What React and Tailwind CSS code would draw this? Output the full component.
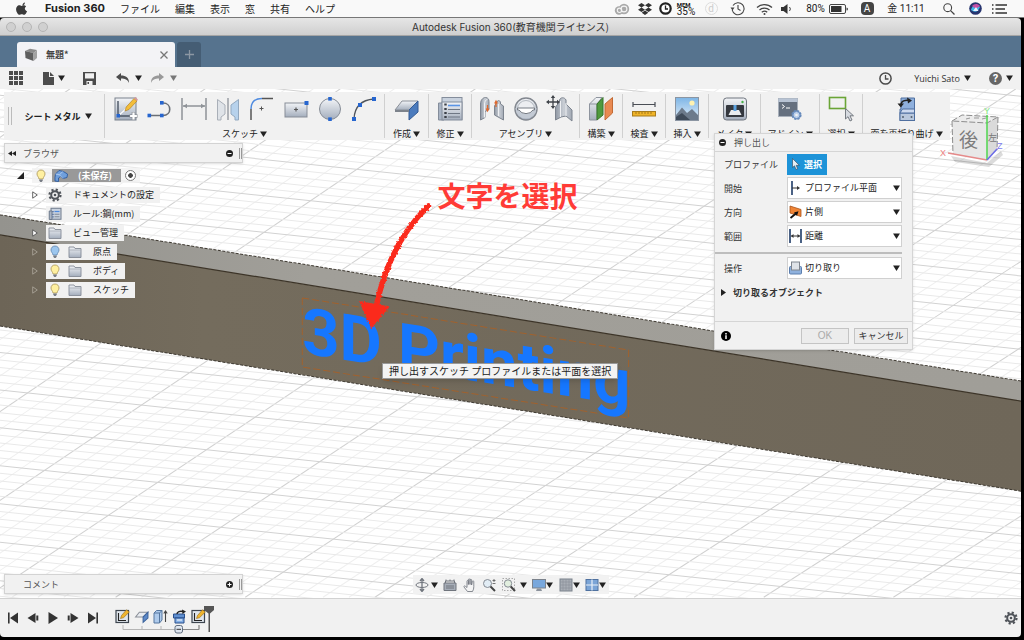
import React from "react";

const range = (a, b) => Array.from({ length: b - a + 1 }, (_, i) => a + i);

function Tri({ className = "text-[#222]" }) {
  return (
    <svg viewBox="0 0 8 7" className={"h-[6px] w-[7px] shrink-0 " + className} aria-hidden="true">
      <path d="M0 0.5H8L4 7Z" fill="currentColor" />
    </svg>
  );
}

function Ico({ size = "h-7 w-7", box = "0 0 28 28", children }) {
  return (
    <svg viewBox={box} className={"shrink-0 " + size} fill="none" aria-hidden="true">
      {children}
    </svg>
  );
}

/* ---------- ribbon icons ---------- */

const SketchIcon = () => (
  <Ico>
    <rect x="3" y="3" width="21" height="22" fill="url(#steel)" stroke="#7a828d" />
    <path d="M6 6V21H21" stroke="#4b5564" strokeWidth="1.4" />
    <path d="M6 21 L15 13" stroke="#fff" strokeWidth="1.2" />
    <rect x="4.500" y="19" width="3.500" height="3.500" fill="#2766cf" />
    <path d="M13 16l1.200-4L22 3.500l3 2.500-8 8.500z" fill="#f3bd3a" stroke="#a8791f" strokeWidth=".6" />
    <path d="M22 3.500l3 2.500 1-1.300-2.600-2.600z" fill="#d99a9a" />
    <path d="M21.500 17v8M17.500 21h8" stroke="#8a8f96" strokeWidth="3.600" />
    <path d="M21.500 17.600v6.800M18.100 21h6.800" stroke="#fff" strokeWidth="2.200" />
  </Ico>
);
const LineIcon = () => (
  <Ico>
    <path d="M3 20.500H17C26 20.500 26 8 17 8" stroke="#6a6f76" strokeWidth="1.600" />
    <rect x="1.500" y="18.700" width="3.600" height="3.600" fill="#2766cf" />
    <rect x="14" y="18.700" width="3.600" height="3.600" fill="#2766cf" />
    <rect x="14" y="6" width="3.600" height="3.600" fill="#2766cf" />
  </Ico>
);
const DimIcon = () => (
  <Ico>
    <path d="M2 3V25M26 3V25M3 11H25" stroke="#8f9398" strokeWidth="1.500" />
    <path d="M3 11l4-2.200v4.400zM25 11l-4-2.200v4.400z" fill="#8f9398" />
  </Ico>
);
const MirrorIcon = () => (
  <Ico>
    <path d="M3.500 4.500L11 10v9L7 22v3H3.500z" fill="#dfe3e8" stroke="#a9afb8" />
    <path d="M24.500 4.500L17 10v9l4 3v3h3.500z" fill="#b7d2ec" stroke="#93a9c0" />
    <path d="M14 3V25" stroke="#9a9ea4" strokeWidth="1.500" />
  </Ico>
);
const FilletIcon = () => (
  <Ico>
    <path d="M3 25V14" stroke="#555" strokeWidth="1.500" />
    <path d="M3 14C3 7 7 3.500 14 3.500" stroke="#4f8be0" strokeWidth="1.500" />
    <path d="M14 3.500H25" stroke="#555" strokeWidth="1.500" />
    <path d="M13.500 11.500v4M11.500 13.500h4" stroke="#555" strokeWidth="1" />
  </Ico>
);
const RectIcon = () => (
  <Ico>
    <rect x="3" y="8" width="22" height="14" fill="url(#steel)" stroke="#878d97" />
    <path d="M14 12.500v4M12 14.500h4" stroke="#555" strokeWidth="1.200" />
    <rect x="22.500" y="6" width="4" height="4" fill="#2766cf" />
  </Ico>
);
const CircleIcon = () => (
  <Ico>
    <circle cx="14" cy="14" r="10.500" fill="url(#steel)" stroke="#878d97" />
    <rect x="12.200" y="2" width="3.600" height="3.600" fill="#2766cf" />
    <rect x="12.200" y="22.400" width="3.600" height="3.600" fill="#2766cf" />
  </Ico>
);
const ArcIcon = () => (
  <Ico>
    <path d="M4 24C4.500 12 11 5 24 4" stroke="#50555c" strokeWidth="1.300" />
    <rect x="2" y="22" width="4" height="4" fill="#2766cf" />
    <rect x="8" y="8" width="4" height="4" fill="#2766cf" />
    <rect x="22" y="2" width="4" height="4" fill="#2766cf" />
  </Ico>
);
const FlangeIcon = () => (
  <Ico>
    <path d="M9 6H25L16 15H2z" fill="url(#steel)" stroke="#8b9099" />
    <path d="M25 6V17L16 25V15z" fill="#4b7bbd" stroke="#345b94" />
    <path d="M2 15h14v2H2z" fill="#7d838c" />
  </Ico>
);
const ModifyIcon = () => (
  <Ico>
    <rect x="6" y="2.500" width="20" height="22" fill="#c9d2de" stroke="#848d9b" />
    <path d="M2.500 8H8v17H2.500z" fill="#a9b4c4" stroke="#848d9b" />
    <rect x="6" y="7" width="20" height="18" fill="url(#steel)" stroke="#848d9b" />
    <path d="M12 10.500H24" stroke="#5a95e6" strokeWidth="1.600" />
    <path d="M12 14.500H24M12 18.500H24M12 22H24" stroke="#6f7784" strokeWidth="1" />
    <path d="M8.300 9.500h2.400M8.300 14h2.400M8.300 18h2.400M8.300 22h2.400" stroke="#3c4048" strokeWidth="2" />
  </Ico>
);
const JointIcon = () => (
  <Ico>
    <path d="M2.500 9c0-4 2.500-6.500 5-6.500 2 0 3.500 1.500 3.500 4v8l-4 2v6l-4.500 2.500z" fill="url(#iron)" stroke="#7d848f" />
    <path d="M6.500 22.500V9c0-2 1-4 3-5" stroke="#eef0f3" />
    <path d="M25.500 25L16.500 20v-9l3-5c1.500-1 3 0 3 2v1l3 2z" fill="url(#iron)" stroke="#7d848f" />
    <path d="M20.500 21V9" stroke="#eef0f3" />
    <path d="M9.500 10v5M8.200 13.500l1.300 2.500 1.300-2.500M18 7v5M16.700 8.500L18 6l1.300 2.500" stroke="#e0672c" strokeWidth="1.200" />
  </Ico>
);
const AsBuiltIcon = () => (
  <Ico>
    <circle cx="14" cy="14" r="11" fill="url(#steel)" stroke="#82878f" strokeWidth="1.400" />
    <circle cx="14" cy="14" r="8.500" fill="#eceef1" stroke="#b4b9c0" />
    <path d="M3.500 13H24.500A10.500 10.500 0 0 1 3.500 13z" fill="#c3cad4" />
    <path d="M5.500 13H22.500V15H21A8 7 0 0 1 7 15H5.500z" fill="#fff" stroke="#777c84" />
  </Ico>
);
const MoveJointIcon = () => (
  <Ico>
    <path d="M9.500 25V12l4-5V5c1-3 5-3 6.500 0v4l6 6v11l-6-5-5 1z" fill="url(#iron)" stroke="#7d848f" />
    <path d="M14.500 22V6M20 21V8" stroke="#eef0f3" />
    <path d="M7 2v10M2 7h10" stroke="#3f4349" strokeWidth="1.300" />
    <path d="M7 0l2.200 3H4.800zM7 14l2.200-3H4.800zM0 7l3-2.200v4.400zM14 7l-3-2.200v4.400z" fill="#3f4349" />
  </Ico>
);
const ConstructIcon = () => (
  <Ico>
    <path d="M2.500 9L9 2.500H15L10 9V25H2.500z" fill="url(#steel)" stroke="#8e949e" />
    <path d="M2.500 9H10" stroke="#8e949e" />
    <path d="M10 9l6-6.500V20l-6 5z" fill="#4f9a3e" stroke="#37752a" />
    <path d="M18 9l7.500-6.500V18L18 25z" fill="#e98a52" stroke="#c26a35" />
  </Ico>
);
const InspectIcon = () => (
  <Ico>
    <path d="M3 9.500H25M3 7v5M25 7v5" stroke="#4a4e55" strokeWidth="1.200" />
    <rect x="2.500" y="16.500" width="23" height="4.500" fill="#f0b428" stroke="#a87c1c" />
    <path d="M6 17v2M9 17v2M12 17v2M15 17v2M18 17v2M21 17v2" stroke="#8f6a17" strokeWidth=".8" />
  </Ico>
);
const InsertIcon = () => (
  <Ico>
    <rect x="2.500" y="2.500" width="23" height="23" fill="url(#sky)" stroke="#8b95a2" />
    <circle cx="19" cy="8" r="2.600" fill="#fff2b0" />
    <path d="M3 20L9 12.500 14 18l5-4 6 6v5H3z" fill="#6c7a8b" />
    <path d="M3 22l6-4 8 7H3z" fill="#3f4b5a" />
  </Ico>
);
const MakeIcon = () => (
  <Ico>
    <rect x="2.500" y="3" width="23" height="22" rx="3" fill="url(#steel)" stroke="#6f757e" />
    <rect x="5" y="10" width="18" height="12" rx="1" fill="#34383f" />
    <path d="M7.500 20l2.500-5h8l2.500 5z" fill="#e8ebef" />
    <rect x="12.500" y="10" width="3" height="6" fill="#5aa0de" />
    <circle cx="21.500" cy="7" r="1.200" fill="#49b04a" />
  </Ico>
);
const AddinIcon = () => (
  <Ico>
    <rect x="2.500" y="3.500" width="19" height="18" fill="#65707f" stroke="#a8b0bb" />
    <rect x="2.500" y="3.500" width="19" height="3.500" fill="#b7c3d4" />
    <path d="M6 9.500l2.500 2L6 13.500M10 13h4" stroke="#fff" strokeWidth="1" />
    <circle cx="20.500" cy="20" r="4.200" fill="#a9c3e6" stroke="#6589bb" strokeWidth="1.800" strokeDasharray="2.200 1.100" />
    <circle cx="20.500" cy="20" r="3.600" fill="#bcd0ec" stroke="#6589bb" />
    <circle cx="20.500" cy="20" r="1.300" fill="#f1f1f1" />
  </Ico>
);
const SelectIcon = () => (
  <Ico>
    <rect x="2.500" y="2.500" width="16" height="11" stroke="#6aa536" strokeWidth="1.600" />
    <path d="M18.500 13.500V24l2.500-2.300 2 4.300 2-1-2-4.200h3.500z" fill="#d6dae0" stroke="#6b7078" strokeWidth=".9" />
  </Ico>
);
const RefoldIcon = () => (
  <Ico>
    <path d="M8 3H21.500V25.500H7V14h1z" fill="#8fb0dd" stroke="#4f6f9f" />
    <rect x="7" y="18" width="14.500" height="7.500" fill="#b9c8dd" stroke="#4f6f9f" />
    <path d="M7 18l2.500-4h12v4z" fill="#cddaf0" stroke="#4f6f9f" />
    <circle cx="10" cy="22" r="1" fill="#55616f" />
    <circle cx="18.500" cy="22" r="1" fill="#55616f" />
    <path d="M8 10C8 6 12 4.500 17 5.500" stroke="#222" strokeWidth="1.600" />
    <path d="M4.500 8.500h6.500l-3.200 4zM14 2.500l5 3-4 3z" fill="#222" />
  </Ico>
);

/* ---------- small tree icons ---------- */

const Bulb = ({ blue }) => (
  <Ico size="h-[14px] w-[14px]" box="0 0 14 14">
    <path
      d="M7 1C4.500 1 3 2.800 3 5c0 2 1.700 2.800 2 5h4c.3-2.200 2-3 2-5 0-2.200-1.500-4-4-4z"
      fill={blue ? "#9cc6ee" : "#fff0a0"}
      stroke={blue ? "#5d83ad" : "#a99455"}
      strokeWidth=".8"
    />
    <path d="M5.300 10.500h3.400v1.300L7.700 13H6.300l-1-1.200z" fill="#777c84" />
  </Ico>
);
const Folder = () => (
  <Ico size="h-[14px] w-[14px]" box="0 0 14 14">
    <path d="M1 2h5l1 1.500h6v9H1z" fill="url(#steel)" stroke="#858b96" strokeWidth=".9" />
    <path d="M1 5h12" stroke="#a2a8b2" strokeWidth=".8" />
  </Ico>
);
const Gear = ({ size = "h-[14px] w-[14px]" }) => (
  <Ico size={size} box="0 0 14 14">
    <circle cx="7" cy="7" r="5.500" stroke="#50545a" strokeWidth="2.200" strokeDasharray="2.160 2.160" />
    <circle cx="7" cy="7" r="3.800" stroke="#50545a" strokeWidth="2" />
    <circle cx="7" cy="7" r="1.300" fill="#50545a" />
  </Ico>
);
const RuleIcon = () => (
  <Ico size="h-[14px] w-[14px]" box="0 0 28 28">
    <rect x="6" y="2.500" width="20" height="22" fill="#c9d2de" stroke="#6e7a8c" strokeWidth="2" />
    <path d="M2.500 8H8v17H2.500z" fill="#a9b4c4" stroke="#6e7a8c" strokeWidth="2" />
    <path d="M13 9H23" stroke="#4c8ae0" strokeWidth="2.500" />
    <path d="M13 14.500H23M13 19.500H23" stroke="#6f7784" strokeWidth="1.600" />
    <path d="M9 9h2M9 14.500h2M9 19.500h2" stroke="#2c4f8b" strokeWidth="2.500" />
  </Ico>
);
const PartIcon = () => (
  <Ico size="h-[14px] w-[14px]" box="0 0 14 14">
    <path d="M1.500 5L5 1.500l4 .8L13.500 5l-.5 3.500L9 9.500 6.500 7.500 4.500 9v3.500L1 12V8.500z" fill="#6f9fdc" stroke="#2c5a9e" strokeWidth=".9" />
    <path d="M1.500 5l4 .8L9 9.500M5.500 5.800L9 2.300" stroke="#c5daf3" strokeWidth=".7" />
  </Ico>
);

/* ---------- drawing area ---------- */

function Scene() {
  return (
    <svg viewBox="0 89 1020 509" preserveAspectRatio="xMidYMid slice" className="absolute inset-0 h-full w-full" role="img" aria-label="モデル">
      <defs>
        <linearGradient id="steel" x1="0" y1="0" x2="0" y2="1">
          <stop offset="0" stopColor="#f2f4f7" />
          <stop offset="1" stopColor="#a4aebd" />
        </linearGradient>
        <linearGradient id="iron" x1="0" y1="0" x2="1" y2="0">
          <stop offset="0" stopColor="#8f97a3" />
          <stop offset="0.500" stopColor="#c9ced5" />
          <stop offset="1" stopColor="#a3aab5" />
        </linearGradient>
        <linearGradient id="sky" x1="0" y1="0" x2="0" y2="1">
          <stop offset="0" stopColor="#7db5e6" />
          <stop offset="1" stopColor="#e4eff8" />
        </linearGradient>
        <linearGradient id="face" x1="0" y1="0" x2="1" y2="0">
          <stop offset="0" stopColor="#6d6557" />
          <stop offset="0.2" stopColor="#746c5d" />
          <stop offset="1" stopColor="#6f6759" />
        </linearGradient>
        <linearGradient id="rim" x1="0" y1="0" x2="1" y2="0">
          <stop offset="0" stopColor="#94938e" />
          <stop offset="0.3" stopColor="#a19f99" />
          <stop offset="1" stopColor="#a09e98" />
        </linearGradient>
        <filter id="rough" x="-20%" y="-20%" width="140%" height="140%">
          <feTurbulence type="fractalNoise" baseFrequency="0.5" numOctaves="2" seed="4" />
          <feDisplacementMap in="SourceGraphic" scale="3" xChannelSelector="R" yChannelSelector="G" />
        </filter>
      </defs>
      <rect x="0" y="89" width="1020" height="509" fill="#fff" />
      {[1, 2, 3, 4, 0].map((m) =>
        range(-8, 7).map((k) => (
          <line
            key={k + "b" + m}
            x1={245 + (k + m / 5) * 129.5}
            y1="597"
            x2={1015 + (k + m / 5) * 135}
            y2="89"
            stroke={m === 0 ? "#d0d0d0" : "#efefef"}
          />
        ))
      )}
      {[1, 2, 3, 4, 0].map((m) =>
        range(-12, 6).map((n) => {
          const k = n + m / 5;
          const y = 390 + 37.6 * k + 0.1 * k * k;
          return <line key={n + "a" + m} x1="0" y1={y} x2="1020" y2={y + 108} stroke={m === 0 ? "#d2d2d2" : "#e9e9e9"} />;
        })
      )}
      <path d="M0 215L1020 381V401L0 235z" fill="url(#rim)" />
      <path d="M0 235L1020 401V491L0 326z" fill="url(#face)" />
      <path d="M0 235L1020 401" stroke="#3c3428" strokeWidth="1.200" />
      <path d="M0 215L1020 381M0 326L1020 491" stroke="#3f3a32" strokeDasharray="3 1.500" />
      <path d="M302 298L628 350V418L302 367z" fill="none" stroke="#a0622f" strokeDasharray="7 3" />
      <g transform="translate(302 353) skewY(9.200)">
        <text x="0" y="0" fontSize="65" fontWeight="700" fill="#1677ff" fontFamily="Roboto, 'Liberation Sans', sans-serif">
          3D Printing
        </text>
      </g>
      <g filter="url(#rough)">
        <path d="M428 206C405 228 386 258 376 306" fill="none" stroke="#fb2c1d" strokeWidth="5.500" strokeLinecap="round" />
        <path d="M360 302L388 307 371 327z" fill="#fb2c1d" stroke="#fb2c1d" strokeWidth="1.500" />
      </g>
      <text x="437" y="207" fontSize="28" fontWeight="700" fill="#ff3b36" fontFamily="'Noto Sans CJK JP', sans-serif">
        文字を選択
      </text>
    </svg>
  );
}

function ViewCube() {
  return (
    <svg viewBox="936 102 70 68" className="absolute right-[14px] top-[13px] h-[68px] w-[70px]" role="img" aria-label="ビューキューブ">
      <path d="M950 156l36 7 14-12 2 4-14 12-34-5z" fill="#000" opacity=".14" />
      <path d="M951 121L961 115 997 117 986 123z" fill="#ececec" />
      <path d="M986 123L997 117 996 150 986 160z" fill="#dadada" />
      <path d="M951 121L986 123V160L952 154z" fill="#e8e8e8" />
      <path d="M951 121L961 115 997 117 986 123zM951 121L952 154M997 117L996 150" fill="none" stroke="#8d8d8d" strokeDasharray="6 2" />
      <path d="M965 119l4-1M973 118h5M981 119l4-1" stroke="#999" />
      <text x="958" y="147" fontSize="19" fill="#7d7d7d" fontFamily="'Noto Sans CJK JP', sans-serif">後</text>
      <text x="987" y="141" fontSize="9" fill="#777" fontFamily="'Noto Sans CJK JP', sans-serif">左</text>
      <path d="M986 160L947 153" stroke="#e58a8a" strokeWidth="1.500" />
      <path d="M986 160V115" stroke="#4fd64f" strokeWidth="1.500" />
      <path d="M986 160L996 149" stroke="#6b6be8" strokeWidth="1.500" />
      <g fontSize="9" fontFamily="'Liberation Sans', sans-serif">
        <text x="939" y="156" fill="#ee8080">X</text>
        <text x="983" y="114" fill="#7fe87f">Y</text>
        <text x="996" y="149" fill="#8080ee">Z</text>
      </g>
    </svg>
  );
}

/* ---------- top bars ---------- */

function Cell({ w, label, children }) {
  return (
    <button type="button" aria-label={label} className={"flex h-full shrink-0 items-center justify-center " + w}>
      {children}
    </button>
  );
}

function MenuBar() {
  return (
    <header className="flex h-[18px] shrink-0 items-center border-b border-[#777] bg-[#f9f9f9] pl-4 pr-[14px] text-[10px] leading-none text-[#222]">
      <svg viewBox="0 0 24 24" className="h-[13px] w-[13px]" aria-hidden="true">
        <path
          fill="#3a3a3a"
          d="M16.400 1c.1 1.300-.4 2.500-1.200 3.400-.8 1-2 1.600-3.200 1.500-.1-1.200.5-2.500 1.200-3.300C14 1.700 15.300 1.100 16.400 1zM20.500 17.200c-.6 1.300-.9 1.900-1.600 3-1 1.600-2.500 3.500-4.200 3.500-1.600 0-2-1-4.100-1s-2.600 1-4.200 1c-1.700 0-3.100-1.700-4.100-3.300C-.4 16-.7 10.900 1.900 8.200c1-1.200 2.700-2 4.300-2 1.700 0 2.700 1 4.100 1s2.200-1 4.200-1c1.500 0 3 .8 4.100 2.200-3.600 2-3 7.100 1.900 8.800z"
        />
      </svg>
      <nav className="ml-4 flex items-center gap-[15px]">
        <button type="button" className="font-[Inter,sans-serif] text-[11px] font-bold">Fusion 360</button>
        <button type="button">ファイル</button>
        <button type="button">編集</button>
        <button type="button">表示</button>
        <button type="button">窓</button>
        <button type="button">共有</button>
        <button type="button">ヘルプ</button>
      </nav>
      <div className="ml-auto flex h-full items-center font-[Roboto,'Noto_Sans_CJK_JP',sans-serif]">
        <Cell w="w-6" label="Creative Cloud">
          <Ico size="h-3 w-4" box="0 0 16 12">
            <circle cx="10" cy="6" r="5.200" fill="#aaa" />
            <circle cx="5" cy="7.500" r="4.200" fill="#aaa" />
            <circle cx="10" cy="6" r="2.900" stroke="#f4f4f4" strokeWidth="1.100" />
            <circle cx="5.500" cy="7.300" r="2.200" stroke="#f4f4f4" strokeWidth="1.100" />
          </Ico>
        </Cell>
        <Cell w="w-[22px]" label="Dropbox">
          <Ico size="h-3 w-[14px]" box="0 0 14 12">
            <path d="M3.500 0L7 2.200 3.500 4.400 0 2.200zM10.500 0L14 2.200 10.500 4.400 7 2.200zM3.500 4.500L7 6.700 3.500 8.900 0 6.700zM10.500 4.500L14 6.700 10.500 8.900 7 6.700zM7 7.500l3.300 2.200L7 12 3.700 9.700z" fill="#333" />
          </Ico>
        </Cell>
        <Cell w="w-[18px]" label="時計">
          <Ico size="h-[13px] w-[13px]" box="0 0 13 13">
            <circle cx="6.500" cy="6.500" r="5.200" stroke="#222" strokeWidth="2.200" fill="#fff" />
            <path d="M6.500 3.500V7H9" stroke="#222" strokeWidth="1.300" />
          </Ico>
        </Cell>
        <Cell w="w-6" label="メモリ">
          <span className="flex flex-col items-start leading-none">
            <span className="text-[6px] font-bold leading-[6px]">MEM</span>
            <span className="text-[10px] leading-[8px]">35%</span>
          </span>
        </Cell>
        <Cell w="w-[26px]" label="ドック">
          <span className="flex h-[13px] w-[13px] items-center justify-center rounded-full border border-[#ddd] text-[10px] text-[#ccc]">d</span>
        </Cell>
        <Cell w="w-[26px]" label="Time Machine">
          <Ico size="h-[15px] w-[15px]" box="0 0 15 15">
            <path d="M3 4.500A6 6 0 1 1 2.200 9" stroke="#444" strokeWidth="1.100" />
            <path d="M.5 6.500h4L2.500 9.500z" fill="#444" />
            <path d="M8 4v4l2.500 1.500" stroke="#444" strokeWidth="1.100" />
          </Ico>
        </Cell>
        <Cell w="w-7" label="Wi-Fi">
          <Ico size="h-3 w-[17px]" box="0 0 17 12">
            <path d="M1 4.500A11 11 0 0 1 16 4.500M3.500 7A7.500 7.500 0 0 1 13.500 7M5.800 9.300A4 4 0 0 1 11.200 9.300" stroke="#444" strokeWidth="1.300" />
            <circle cx="8.500" cy="11" r="1" fill="#444" />
          </Ico>
        </Cell>
        <Cell w="w-[18px]" label="音量">
          <Ico size="h-[10px] w-3" box="0 0 12 10">
            <path d="M0 3h2.500L6.500 0v10l-4-3H0z" fill="#333" />
            <path d="M8.500 3a3 3 0 0 1 0 4" stroke="#444" />
          </Ico>
        </Cell>
        <Cell w="w-[62px]" label="バッテリー">
          <span className="mr-1">80%</span>
          <Ico size="h-[10px] w-[19px]" box="0 0 19 10">
            <rect x=".5" y=".5" width="16" height="9" rx="1.500" stroke="#444" />
            <rect x="2" y="2" width="10.500" height="6" fill="#333" />
            <path d="M17.500 3.500a1.500 1.500 0 0 1 0 3z" fill="#444" />
          </Ico>
        </Cell>
        <Cell w="w-[18px]" label="入力ソース">
          <span className="flex h-[13px] w-[13px] items-center justify-center rounded-sm bg-[#444] text-[10px] text-white">A</span>
        </Cell>
        <Cell w="w-[60px]" label="日時">
          金 11:11
        </Cell>
        <Cell w="w-[26px]" label="検索">
          <Ico size="h-3 w-3" box="0 0 12 12">
            <circle cx="4.700" cy="4.700" r="3.900" stroke="#444" strokeWidth="1.100" />
            <path d="M7.600 7.600L11.500 11.500" stroke="#444" strokeWidth="1.300" />
          </Ico>
        </Cell>
        <Cell w="w-[26px]" label="Siri">
          <Ico size="h-[13px] w-[13px]" box="0 0 13 13">
            <circle cx="6.500" cy="6.500" r="6.300" fill="#27346f" />
            <path d="M2 8C3 3 7 2 11 5c-2 5-5 6-9 3z" fill="#3fb6e8" />
            <path d="M3 4c2-2 5-3 8 0L7 7z" fill="#c44fa6" />
            <path d="M4 9l3-4 2.500 4z" fill="#e8f4ff" />
          </Ico>
        </Cell>
        <Cell w="w-[22px]" label="通知センター">
          <Ico size="h-[10px] w-[15px]" box="0 0 15 10">
            <path d="M3.500 1H15M3.500 5H13M3.500 9H15" stroke="#333" strokeWidth="1.500" />
            <path d="M0 1h1.500M0 5h1.500M0 9h1.500" stroke="#333" strokeWidth="1.500" />
          </Ico>
        </Cell>
      </div>
    </header>
  );
}

function TitleBar() {
  return (
    <div className="grid h-[18px] shrink-0 grid-cols-[1fr_auto_1fr] items-center rounded-t-[4px] border-b border-[#a5a5a5] bg-linear-to-b from-[#e6e6e6] to-[#cfcfcf]">
      <div className="flex gap-1.5 pl-1.5">
        {["閉じる", "しまう", "拡大"].map((l) => (
          <button key={l} type="button" aria-label={l} className="h-[10px] w-[10px] rounded-full border border-[#b5b5b5] bg-[#d0d0d0]" />
        ))}
      </div>
      <h1 className="text-[10px] leading-none text-[#333]">
        <span className="font-[Inter,sans-serif]">Autodesk Fusion 360(</span>教育機関ライセンス)
      </h1>
    </div>
  );
}

function TabStrip() {
  return (
    <div className="flex h-[31px] shrink-0 items-end gap-0.5 bg-[#56738e] pl-[17px]">
      <div className="flex h-[25px] w-[158px] items-center rounded-t-[3px] bg-[#f3f3f6] px-[7px] text-[9px] font-bold text-[#444]">
        <Ico size="h-[14px] w-[14px]" box="0 0 14 14">
          <path d="M1 3L6 .8 13 2 9.500 5z" fill="#8b8b8b" />
          <path d="M1 3L9.500 5V13L1.500 10z" fill="#5f5f5f" />
          <path d="M9.500 5L13 2V10L9.500 13z" fill="#a2a2a2" />
        </Ico>
        <span className="ml-2">無題*</span>
        <button type="button" aria-label="タブを閉じる" className="ml-auto">
          <Ico size="h-2 w-2" box="0 0 8 8">
            <path d="M.5.5l7 7M7.500.5l-7 7" stroke="#777" strokeWidth="1.300" />
          </Ico>
        </button>
      </div>
      <button type="button" aria-label="新しいタブ" className="flex h-[25px] w-6 items-center justify-center rounded-t-[3px] bg-[#455d74]">
        <Ico size="h-[9px] w-[9px]" box="0 0 9 9">
          <path d="M4.500 0v9M0 4.500h9" stroke="#8c97a3" strokeWidth="1.300" />
        </Ico>
      </button>
    </div>
  );
}

function QuickBar() {
  return (
    <div className="flex h-[22px] shrink-0 items-center bg-[#f1f1f1] pl-[9px] pr-2">
      <button type="button" aria-label="データパネル">
        <Ico size="h-[14px] w-[14px]" box="0 0 14 14">
          {[0, 5, 10].map((x) => [0, 5, 10].map((y) => <rect key={x + "-" + y} x={x} y={y} width="4" height="4" fill="#4c4c4c" />))}
        </Ico>
      </button>
      <button type="button" aria-label="ファイル" className="ml-5 flex items-center gap-1">
        <Ico size="h-[13px] w-[11px]" box="0 0 11 13">
          <path d="M0 0h6v5h5v8H0zM7 0l4 4H7z" fill="#4c4c4c" />
        </Ico>
        <Tri />
      </button>
      <button type="button" aria-label="保存" className="ml-[18px]">
        <Ico size="h-[13px] w-[13px]" box="0 0 13 13">
          <path d="M0 0h13v13H0z" fill="#4c4c4c" />
          <path d="M2 1.200h9v5.300H2zM3.500 9h6v4h-6z" fill="#f1f1f1" />
          <path d="M4.500 10h1.500v2H4.500z" fill="#4c4c4c" />
        </Ico>
      </button>
      <button type="button" aria-label="元に戻す" className="ml-5 flex items-center gap-1.5">
        <Ico size="h-[10px] w-[13px]" box="0 0 13 10">
          <path d="M0 4L5 0v2.500c5 0 8 2 8 7.500-1.500-3.500-4-4.500-8-4.500V8z" fill="#4c4c4c" />
        </Ico>
        <Tri />
      </button>
      <button type="button" aria-label="やり直し" className="ml-[9px] flex items-center gap-1.5">
        <Ico size="h-[10px] w-[13px]" box="0 0 13 10">
          <path d="M13 4L8 0v2.500C3 2.500 0 4.500 0 10c1.500-3.500 4-4.500 8-4.500V8z" fill="#999" />
        </Ico>
        <Tri className="text-[#777]" />
      </button>
      <div className="ml-auto flex items-center">
        <button type="button" aria-label="ジョブの状態">
          <Ico size="h-[13px] w-[13px]" box="0 0 13 13">
            <circle cx="6.500" cy="6.500" r="5.600" stroke="#4c4c4c" strokeWidth="1.500" />
            <path d="M6.500 3v4H9.500" stroke="#4c4c4c" strokeWidth="1.300" />
          </Ico>
        </button>
        <button type="button" className="ml-[22px] flex items-center gap-1 font-['Open_Sans',sans-serif] text-[9px] leading-none text-[#333]">
          Yuichi Sato
          <Tri />
        </button>
        <button type="button" aria-label="ヘルプ" className="ml-[18px] flex items-center gap-1">
          <span className="flex h-[13px] w-[13px] items-center justify-center rounded-full bg-[#666] font-[Inter,sans-serif] text-[10px] font-bold leading-none text-white">?</span>
          <Tri />
        </button>
      </div>
    </div>
  );
}

/* ---------- ribbon ---------- */

const GROUPS = [
  { label: "スケッチ", w: "w-[280px]", tools: [["スケッチを作成", SketchIcon], ["線分", LineIcon], ["寸法", DimIcon], ["ミラー", MirrorIcon], ["フィレット", FilletIcon], ["長方形", RectIcon], ["円", CircleIcon], ["円弧", ArcIcon]] },
  { label: "作成", w: "w-11", tools: [["フランジ", FlangeIcon]] },
  { label: "修正", w: "w-[43px]", tools: [["ルール", ModifyIcon]] },
  { label: "アセンブリ", w: "w-[108px]", tools: [["ジョイント", JointIcon], ["位置固定ジョイント", AsBuiltIcon], ["移動", MoveJointIcon]] },
  { label: "構築", w: "w-[43px]", tools: [["オフセット平面", ConstructIcon]] },
  { label: "検査", w: "w-[43px]", tools: [["計測", InspectIcon]] },
  { label: "挿入", w: "w-[43px]", tools: [["デカール", InsertIcon]] },
  { label: "メイク", w: "w-[52px]", tools: [["3Dプリント", MakeIcon]] },
  { label: "アドイン", w: "w-[59px]", tools: [["スクリプト", AddinIcon]] },
  { label: "選択", w: "w-[43px]", tools: [["選択ツール", SelectIcon]] },
  { label: "面を再折り曲げ", w: "w-[88px]", tools: [["再折り曲げ", RefoldIcon]] },
];

function Ribbon() {
  return (
    <div className="relative ml-1 mt-[3px] flex h-12 items-stretch self-start bg-[#f1f1f1] text-[9px] leading-none text-[#222]">
      <div className="ml-1 flex items-center gap-[2px]">
        <span className="h-[18px] w-px bg-[#bbb]" />
        <span className="h-[18px] w-px bg-[#bbb]" />
      </div>
      <button type="button" className="flex w-[92px] items-center justify-center gap-1 font-bold">
        シート メタル
        <Tri />
      </button>
      {GROUPS.map((g) => (
        <section key={g.label} className={"flex items-stretch " + g.w}>
          <span className="my-0.5 w-px bg-[#d0d0d0]" />
          <div className="flex flex-1 flex-col items-center justify-between pb-px pt-[3px]">
            <div className="flex">
              {g.tools.map(([name, Icon]) => (
                <button key={name} type="button" aria-label={name} className={g.tools.length > 1 ? "flex w-[34px] justify-center" : "flex"}>
                  <Icon />
                </button>
              ))}
            </div>
            <button type="button" className="flex items-center gap-0.5 whitespace-nowrap leading-[10px]">
              {g.label}
              <Tri />
            </button>
          </div>
        </section>
      ))}
    </div>
  );
}

/* ---------- browser ---------- */

function PanelBar({ title, collapse, open }) {
  return (
    <div className="flex h-5 w-[239px] items-center border border-[#d3d3d3] bg-[#f1f1f1] pl-[3px] text-[9px] leading-none text-[#555] shadow-sm">
      <span className="flex w-[15px]">
        {collapse && (
          <Ico size="h-[5px] w-2" box="0 0 8 5">
            <path d="M4 0v5L0 2.500zM8 0v5L4 2.500z" fill="#222" />
          </Ico>
        )}
      </span>
      <h2>{title}</h2>
      <button type="button" aria-label={title + "の表示"} className="ml-auto">
        <Ico size="h-[7px] w-[7px]" box="0 0 7 7">
          <circle cx="3.500" cy="3.500" r="3.500" fill="#222" />
          <path d="M1.500 3.500h4" stroke="#fff" />
          {open && <path d="M3.500 1.500v4" stroke="#fff" />}
        </Ico>
      </button>
      <span className="ml-1.5 h-[11px] w-[3px] border-x border-[#999]" />
    </div>
  );
}

const NODES = [
  { label: "ドキュメントの設定", icon: Gear, arrow: true },
  { label: "ルール:鋼(mm)", icon: RuleIcon },
  { label: "ビュー管理", icon: Folder, arrow: true },
  { label: "原点", icon: Folder, arrow: true, bulb: "blue" },
  { label: "ボディ", icon: Folder, arrow: true, bulb: "yellow" },
  { label: "スケッチ", icon: Folder, arrow: true, bulb: "yellow" },
];

function Tree() {
  return (
    <ul className="relative mt-1 flex flex-col gap-0.5 text-[9px] leading-none text-[#222]">
      <li className="flex h-[17px] items-center">
        <Ico size="ml-[17px] h-[7px] w-[7px]" box="0 0 7 7">
          <path d="M7 0V7H0z" fill="#222" />
        </Ico>
        <div className="ml-2 flex h-[15px] items-center bg-[#f1f1f1]/80 pl-0.5 pr-1">
          <Bulb />
          <span className="ml-1 flex h-[13px] w-[69px] items-center bg-[#999] pl-0.5 font-bold text-white">
            <PartIcon />
            <span className="ml-2.5">(未保存)</span>
          </span>
          <input
            type="radio"
            defaultChecked
            aria-label="アクティブにする"
            className="ml-1 h-[11px] w-[11px] appearance-none rounded-full border border-[#777] bg-white bg-[radial-gradient(circle,#444_32%,transparent_40%)]"
          />
        </div>
      </li>
      {NODES.map((n) => {
        const Icon = n.icon;
        return (
          <li key={n.label} className="flex h-[17px] items-center">
            <span className="ml-8 flex w-[14px] shrink-0">
              {n.arrow && (
                <Ico size="h-2 w-[6px]" box="0 0 6 8">
                  <path d="M.7.8L5.300 4 .7 7.200z" stroke={n.bulb ? "#a8a396" : "#555"} strokeWidth=".9" fill={n.bulb ? "none" : "#fff"} />
                </Ico>
              )}
            </span>
            <div className="flex h-4 items-center bg-[#f1f1f1] pl-0.5 pr-1.5">
              {n.bulb && (
                <span className="mr-1.5 flex">
                  <Bulb blue={n.bulb === "blue"} />
                </span>
              )}
              <Icon />
              <span className="ml-[11px] whitespace-nowrap">{n.label}</span>
            </div>
          </li>
        );
      })}
    </ul>
  );
}

/* ---------- extrude dialog ---------- */

const StartIcon = () => (
  <Ico size="h-[14px] w-[13px]" box="0 0 13 14">
    <path d="M3 0V14" stroke="#1d3a66" strokeWidth="1.600" />
    <path d="M3 7H9" stroke="#333" />
    <path d="M8 5l3 2-3 2z" fill="#333" />
  </Ico>
);
const SideIcon = () => (
  <Ico size="h-[14px] w-[13px]" box="0 0 13 14">
    <path d="M1 1l11 3.500V11.500L1 8z" fill="#ef8436" stroke="#a9531a" strokeWidth=".8" />
    <path d="M1.500 13l6-5" stroke="#111" strokeWidth="1.800" />
    <path d="M9.500 6.200L5 7.500 8 10.800z" fill="#111" />
  </Ico>
);
const DistanceIcon = () => (
  <Ico size="h-[14px] w-[13px]" box="0 0 13 14">
    <path d="M1 0V14M12 0V14" stroke="#1d3a66" strokeWidth="1.600" />
    <path d="M2 7H11" stroke="#333" />
    <path d="M2 7l2.500-2v4zM11 7L8.500 5v4z" fill="#333" />
  </Ico>
);
const CutIcon = () => (
  <Ico size="h-[14px] w-[13px]" box="0 0 13 14">
    <rect x=".5" y="5.500" width="12" height="7.500" rx="1" fill="#8fb1dd" stroke="#5b7eae" />
    <rect x="2.500" y="1" width="8" height="8" fill="#dfe3e8" stroke="#7f858e" />
  </Ico>
);

function SelectRow({ id, label, value, icon: Icon, options }) {
  return (
    <div className="flex h-6 items-center">
      <label htmlFor={id} className="w-[63px] shrink-0">{label}</label>
      <div className="flex h-[22px] min-w-0 flex-1 items-center border border-[#d0d0d0] bg-white pl-px pr-px">
        <Icon />
        <select id={id} defaultValue={value} className="ml-[3px] min-w-0 flex-1 appearance-none bg-transparent text-[9px] leading-3 text-[#222] outline-none">
          <option>{value}</option>
          {options.map((o) => (
            <option key={o}>{o}</option>
          ))}
        </select>
        <Tri />
      </div>
    </div>
  );
}

function ExtrudeDialog() {
  return (
    <section aria-label="押し出し" className="absolute right-[108px] top-11 flex w-[199px] flex-col border border-[#d5d5d5] bg-[#f1f1f1] text-[9px] leading-none text-[#333] shadow-sm">
      <header className="flex h-[18px] items-center border-b border-[#d5d5d5] pl-1 text-[#555]">
        <Ico size="h-[7px] w-[7px]" box="0 0 7 7">
          <circle cx="3.500" cy="3.500" r="3.500" fill="#222" />
          <path d="M1.500 3.500h4" stroke="#fff" />
        </Ico>
        <h2 className="ml-2">押し出し</h2>
      </header>
      <div className="flex h-[169px] flex-col">
        <div className="flex h-6 items-center pl-[9px]">
          <span className="w-[63px]">プロファイル</span>
          <button type="button" className="flex h-[21px] w-10 items-center justify-center gap-1 bg-[#1d93d8] font-bold text-white">
            <Ico size="h-3 w-2" box="0 0 8 12">
              <path d="M.5.5v9l2-1.700 1.500 3.700 1.600-.8L4.200 7.300H7.300z" fill="#e8eef4" stroke="#345" strokeWidth=".6" />
            </Ico>
            選択
          </button>
        </div>
        <div className="pl-[9px] pr-[10px]">
          <SelectRow id="start" label="開始" value="プロファイル平面" icon={StartIcon} options={["オフセット平面", "オブジェクトから"]} />
          <SelectRow id="direction" label="方向" value="片側" icon={SideIcon} options={["両側", "対称"]} />
          <SelectRow id="extent" label="範囲" value="距離" icon={DistanceIcon} options={["オブジェクト", "すべて"]} />
        </div>
        <hr className="mb-0.5 mr-[10px] mt-1 h-0.5 border-0 bg-[#bdbdbd]" />
        <div className="pl-[9px] pr-[10px]">
          <SelectRow id="operation" label="操作" value="切り取り" icon={CutIcon} options={["結合", "交差"]} />
        </div>
        <button type="button" className="flex h-6 items-center pl-1.5 font-bold">
          <Ico size="h-[7px] w-[5px]" box="0 0 5 7">
            <path d="M0 0L5 3.500 0 7z" fill="#222" />
          </Ico>
          <span className="ml-[7px]">切り取るオブジェクト</span>
        </button>
      </div>
      <footer className="flex h-7 items-center border-t border-[#d5d5d5] pl-1.5 pr-1">
        <button type="button" aria-label="情報">
          <Ico size="h-[10px] w-[10px]" box="0 0 10 10">
            <circle cx="5" cy="5" r="5" fill="#000" />
            <path d="M5 4.300V8M5 2v1.400" stroke="#fff" strokeWidth="1.500" />
          </Ico>
        </button>
        <button type="button" disabled className="ml-auto h-4 w-12 border border-[#c4c4c4] bg-[#ececec] font-['Liberation_Sans',sans-serif] text-[10px] leading-none text-[#aaa]">
          OK
        </button>
        <button type="button" className="ml-[5px] h-4 w-[54px] border border-[#c4c4c4] bg-[#ececec] text-[9px] leading-none text-[#333]">
          キャンセル
        </button>
      </footer>
    </section>
  );
}

/* ---------- navigation bar and timeline ---------- */

function NavBar() {
  const s = "h-[14px] w-[14px]";
  return (
    <div className="flex h-[19px] w-[196px] items-center justify-between bg-[#f1f1f1]/90 px-0.5">
      <button type="button" aria-label="オービット" className="flex items-center gap-0.5">
        <Ico size={s} box="0 0 14 14">
          <ellipse cx="7" cy="7" rx="6" ry="2.500" stroke="#70757d" />
          <path d="M7 1v12M5 3l2-2.500L9 3M5 11l2 2.500L9 11" stroke="#70757d" strokeWidth="1.300" />
        </Ico>
        <Tri />
      </button>
      <button type="button" aria-label="ビュー正面">
        <Ico size={s} box="0 0 14 14">
          <path d="M1 5h12v7.500H1z" fill="#a6adb8" stroke="#70757d" />
          <path d="M2.500 5V3h9v2M3 8h8M3 10h8" stroke="#70757d" />
          <path d="M3 3V1.500M7 3V1.500M11 3V1.500" stroke="#70757d" />
        </Ico>
      </button>
      <button type="button" aria-label="画面移動">
        <Ico size={s} box="0 0 14 14">
          <path d="M4.500 13.500L1 9c-.5-1 .8-1.500 1.500-.6L4 9.500V3.300c0-1.100 1.400-1.100 1.400 0V6.500 1.700c0-1.100 1.600-1.100 1.600 0v4.800-4.400c0-1.100 1.600-1.100 1.600 0V7L9.300 3.500c.2-1 1.600-.8 1.500.2C10.600 7 11.500 10.500 9.500 13.500z" fill="#f4f4f4" stroke="#6b7078" strokeWidth=".8" />
        </Ico>
      </button>
      <button type="button" aria-label="ズーム">
        <Ico size={s} box="0 0 14 14">
          <circle cx="5.500" cy="5.500" r="4" fill="#e2edf5" stroke="#858b93" />
          <path d="M8.500 8.500L13 13" stroke="#444" strokeWidth="2" />
          <path d="M12 1v3M10.500 2.500h3M10.500 5.500h3" stroke="#555" strokeWidth=".8" />
        </Ico>
      </button>
      <button type="button" aria-label="窓ズーム" className="flex items-center gap-1">
        <Ico size={s} box="0 0 14 14">
          <rect x=".5" y=".5" width="12" height="12" stroke="#aaa" strokeDasharray="1.500 1.500" />
          <circle cx="6" cy="5.500" r="3.700" fill="#e2efdf" stroke="#858b93" />
          <path d="M8.700 8.500L13 13" stroke="#444" strokeWidth="2" />
        </Ico>
        <Tri />
      </button>
      <button type="button" aria-label="表示設定" className="flex items-center">
        <Ico size={s} box="0 0 14 14">
          <rect x=".5" y="1.500" width="13" height="8.500" fill="#78a7dc" stroke="#7b828c" />
          <path d="M5 10.500h4l1 2.500H4z" fill="#8b929c" />
        </Ico>
        <Tri />
      </button>
      <button type="button" aria-label="グリッド" className="flex items-center">
        <Ico size={s} box="0 0 14 14">
          <rect x="1" y="1" width="12" height="12" fill="#a9aeb6" stroke="#7b828c" />
          <path d="M4 1v12M7 1v12M10 1v12M1 4h12M1 7h12M1 10h12" stroke="#8c929b" strokeWidth=".7" />
        </Ico>
        <Tri />
      </button>
      <button type="button" aria-label="ビューポート" className="flex items-center">
        <Ico size={s} box="0 0 14 14">
          <rect x="1" y="1.500" width="12" height="11" fill="#7ba4d6" stroke="#4f719f" />
          <path d="M7 1.500v11M1 7h12" stroke="#e9f0f8" strokeWidth="1.200" />
        </Ico>
        <Tri />
      </button>
    </div>
  );
}

const SketchMini = () => (
  <Ico size="h-[15px] w-[15px]" box="0 0 15 15">
    <rect x="1" y="1.500" width="12.500" height="12" fill="#dfe5ec" stroke="#3e4650" strokeWidth="1.200" />
    <path d="M3.500 4v7.500H11" stroke="#222" strokeWidth="1.100" />
    <path d="M5.500 9.500L6.500 6.500 11.500.8 14.300 3 8.500 8.700z" fill="#f0b52e" stroke="#93691a" strokeWidth=".6" />
  </Ico>
);
const FlangeMini = () => (
  <Ico size="h-[15px] w-[15px]" box="0 0 28 28">
    <path d="M10 6H26L17 15H3z" fill="#e9ecf1" stroke="#8b9099" strokeWidth="2" />
    <path d="M26 6V17L17 25V15z" fill="#5c88c8" stroke="#3c639c" strokeWidth="2" />
  </Ico>
);
const ExtrudeMini = () => (
  <Ico size="h-[15px] w-[15px]" box="0 0 15 15">
    <path d="M1 4l2.500-2.500H9V11l-2.500 3H1z" fill="#aecaeb" stroke="#56779f" />
    <path d="M1 4h5.500V14M6.500 4L9 1.500" stroke="#56779f" />
    <path d="M12.500 13V3M10.800 4.500l1.700-2.500 1.700 2.500" stroke="#444" strokeWidth="1.100" />
  </Ico>
);
const UnfoldMini = () => (
  <Ico size="h-[15px] w-[15px]" box="0 0 15 15">
    <path d="M1.500 5h11v4h-11z" fill="#5f8fd0" stroke="#294f8c" />
    <path d="M3 9h9v5H3z" fill="#84aee4" stroke="#294f8c" />
    <path d="M5 5C5 2.500 8 2 11 2.500" stroke="#222" strokeWidth="1.400" />
    <path d="M10 .5l4 2-3.500 2.500z" fill="#222" />
    <path d="M5 11h5" stroke="#fff" />
  </Ico>
);

function Timeline() {
  const fill = "#333";
  const play = [
    ["先頭へ", <path key="p" d="M1 .5h1.600v11H1zM11 .5v11L3 6z" fill={fill} />],
    ["前へ", <path key="p" d="M8.500 1v10L.5 6zM9.300 3.500h2v5h-2z" fill={fill} />],
    ["再生", <path key="p" d="M1.500 0v12L11 6z" fill={fill} />],
    ["次へ", <path key="p" d="M3.500 1v10L11.500 6zM.7 3.500h2v5H.7z" fill={fill} />],
    ["末尾へ", <path key="p" d="M1 .5v11L9 6zM9.400 .5H11v11H9.400z" fill={fill} />],
  ];
  return (
    <footer className="flex h-[39px] shrink-0 items-start rounded-b-[4px] border-t border-[#d2d2d2] bg-[#f1f1f1] pl-[7px] pr-[3px]">
      <div className="mt-[13px] flex gap-2">
        {play.map(([l, shape]) => (
          <button key={l} type="button" aria-label={l}>
            <Ico size="h-3 w-3" box="0 0 12 12">{shape}</Ico>
          </button>
        ))}
      </div>
      <div className="ml-4 mt-[10px] flex flex-col">
        <div className="flex gap-1">
          {[SketchMini, FlangeMini, ExtrudeMini, UnfoldMini, SketchMini].map((I, i) => (
            <button key={i} type="button" aria-label={"フィーチャ " + (i + 1)}>
              <I />
            </button>
          ))}
        </div>
        <Ico size="h-[10px] w-[91px]" box="0 0 91 10">
          <path d="M8 1v4.500H84V1M27 2v3M46 2v3" stroke="#b5b5b5" />
          <path d="M64 5.500H84V1" stroke="#888" />
          <rect x="60" y="1.500" width="7.500" height="7.500" rx="2" fill="#dfe6f0" stroke="#5e6b7d" />
          <path d="M61.500 5.300h4.500" stroke="#333" />
        </Ico>
      </div>
      <Ico size="-ml-0.5 mt-[7px] h-[26px] w-[10px]" box="0 0 10 26">
        <path d="M0 0h10v4L6 7.500V26H4.500V7.500L0 4z" fill="#555" />
      </Ico>
      <button type="button" aria-label="タイムライン設定" className="ml-auto mt-3">
        <Gear />
      </button>
    </footer>
  );
}

export default function App() {
  return (
    <div lang="ja" className="flex h-screen w-full flex-col overflow-hidden bg-black font-['Noto_Sans_CJK_JP',sans-serif]">
      <MenuBar />
      <div className="mb-[3px] mr-[3px] flex min-h-0 flex-1 flex-col">
        <TitleBar />
        <TabStrip />
        <QuickBar />
        <main className="relative flex min-h-0 flex-1 flex-col overflow-hidden">
          <Scene />
          <Ribbon />
          <div className="relative ml-1 mt-[3px] self-start">
            <PanelBar title="ブラウザ" collapse />
          </div>
          <Tree />
          <div className="relative mt-auto grid grid-cols-[1fr_auto_1fr] items-end px-1 pb-1">
            <PanelBar title="コメント" open />
            <NavBar />
          </div>
          <ViewCube />
          <ExtrudeDialog />
          <div role="tooltip" className="absolute left-[382px] top-[274px] whitespace-nowrap border border-[#999] bg-[#f3f3f3] px-1.5 py-px text-[10px] leading-3 text-[#222] shadow-md">
            押し出すスケッチ プロファイルまたは平面を選択
          </div>
        </main>
        <Timeline />
      </div>
    </div>
  );
}
